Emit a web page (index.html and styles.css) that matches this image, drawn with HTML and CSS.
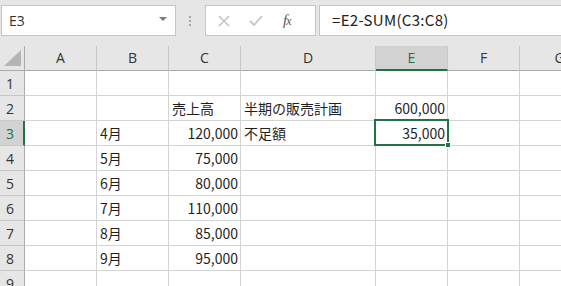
FILE: index.html
```html
<!DOCTYPE html>
<html lang="ja">
<head>
<meta charset="utf-8">
<link rel="stylesheet" href="styles.css">
</head>
<body>
<div class="toolbar">
  <div class="namebox"><span class="nb-text">E3</span><span class="nb-arrow"></span></div>
  <div class="grip"><span></span><span></span><span></span></div>
  <div class="fxbox">
    <svg class="ic" width="14" height="14" viewBox="0 0 14 14"><path d="M2 2 L12 12 M12 2 L2 12" stroke="#c4c4c4" stroke-width="1.6" fill="none"/></svg>
    <svg class="ic" width="16" height="14" viewBox="0 0 16 14"><path d="M2 7 L6 11 L14 2" stroke="#c4c4c4" stroke-width="1.8" fill="none"/></svg>
    <span class="fx"><i>f</i><i class="x">x</i></span>
  </div>
  <div class="formula">=E2-SUM(C3:C8)</div>
</div>
<div class="sheet">
  <div class="grid">
    <div class="corner"><span class="tri"></span></div>
    <div class="ch">A</div><div class="ch">B</div><div class="ch">C</div><div class="ch">D</div><div class="ch sel">E</div><div class="ch">F</div><div class="ch">G</div>

    <div class="rh">1</div><div class="c"></div><div class="c"></div><div class="c"></div><div class="c"></div><div class="c"></div><div class="c"></div><div class="c"></div>
    <div class="rh">2</div><div class="c"></div><div class="c"></div><div class="c">売上高</div><div class="c">半期の販売計画</div><div class="c n">600,000</div><div class="c"></div><div class="c"></div>
    <div class="rh sel">3</div><div class="c"></div><div class="c">4月</div><div class="c n">120,000</div><div class="c">不足額</div><div class="c n">35,000</div><div class="c"></div><div class="c"></div>
    <div class="rh">4</div><div class="c"></div><div class="c">5月</div><div class="c n">75,000</div><div class="c"></div><div class="c"></div><div class="c"></div><div class="c"></div>
    <div class="rh">5</div><div class="c"></div><div class="c">6月</div><div class="c n">80,000</div><div class="c"></div><div class="c"></div><div class="c"></div><div class="c"></div>
    <div class="rh">6</div><div class="c"></div><div class="c">7月</div><div class="c n">110,000</div><div class="c"></div><div class="c"></div><div class="c"></div><div class="c"></div>
    <div class="rh">7</div><div class="c"></div><div class="c">8月</div><div class="c n">85,000</div><div class="c"></div><div class="c"></div><div class="c"></div><div class="c"></div>
    <div class="rh">8</div><div class="c"></div><div class="c">9月</div><div class="c n">95,000</div><div class="c"></div><div class="c"></div><div class="c"></div><div class="c"></div>
    <div class="rh">9</div><div class="c"></div><div class="c"></div><div class="c"></div><div class="c"></div><div class="c"></div><div class="c"></div><div class="c"></div>
  </div>
  <div class="selection"><span class="handle"></span></div>
</div>
</body>
</html>
```

FILE: styles.css
```css
* { box-sizing: border-box; }
html, body { margin: 0; padding: 0; }
body {
  width: 561px;
  height: 286px;
  overflow: hidden;
  background: #fff;
  font-family: "Noto Sans CJK JP", "Noto Sans", sans-serif;
  color: #1f1f1f;
}
.toolbar {
  height: 46px;
  background: #e6e6e6;
  display: flex;
  align-items: flex-start;
  padding-top: 5px;
  padding-left: 1px;
}
.namebox {
  width: 175px;
  height: 31px;
  background: #fff;
  border: 1px solid #c6c6c6;
  display: flex;
  align-items: center;
  justify-content: space-between;
  padding: 0 8px 0 7px;
  font-family: "Open Sans", "Noto Sans", sans-serif;
  font-size: 14px;
  color: #333;
}
.nb-arrow {
  width: 0; height: 0;
  border-left: 4px solid transparent;
  border-right: 4px solid transparent;
  border-top: 4px solid #7a7a7a;
  margin-top: -3px;
}
.grip {
  width: 29px;
  height: 31px;
  display: flex;
  flex-direction: column;
  align-items: center;
  justify-content: center;
  gap: 2px;
  padding-right: 1px;
}
.grip span { width: 2px; height: 2px; background: #a6a6a6; }
.fxbox {
  width: 111px;
  height: 31px;
  background: #fff;
  border: 1px solid #c6c6c6;
  display: flex;
  align-items: center;
  padding-left: 11px;
  gap: 17px;
}
.fx {
  font-family: "Liberation Serif", serif;
  font-size: 15px;
  color: #555;
  margin-left: 2px;
}
.fx i { font-style: italic; }
.fx .x { font-size: 12px; margin-left: -1px; }
.formula {
  flex: 1;
  margin-left: 3px;
  height: 31px;
  background: #fff;
  border: 1px solid #c6c6c6;
  border-right: none;
  padding-left: 12px;
  font-size: 15px;
  letter-spacing: 0.3px;
  line-height: 28px;
  color: #222;
}
.sheet { position: relative; }
.grid {
  display: grid;
  width: 600px;
  grid-template-columns: 25px 72px 72px 72px 135px 72px 72px 80px;
  grid-template-rows: 25px repeat(9, 25px);
}
.corner {
  background: #e6e6e6;
  border-right: 1px solid #ababab;
  border-bottom: 1px solid #ababab;
  position: relative;
}
.tri {
  position: absolute;
  right: 3px;
  bottom: 4px;
  width: 0; height: 0;
  border-left: 17px solid transparent;
  border-bottom: 16px solid #b4b4b4;
}
.ch {
  background: #e6e6e6;
  border-right: 1px solid #c8c8c8;
  border-bottom: 1px solid #ababab;
  text-align: center;
  font-family: "Open Sans", "Noto Sans", sans-serif;
  font-size: 14px;
  line-height: 24px;
  color: #333;
}
.ch.sel {
  background: #d2d2d2;
  border-bottom: 2px solid #217346;
  color: #217346;
}
.rh {
  background: #e6e6e6;
  border-right: 1px solid #ababab;
  border-bottom: 1px solid #c8c8c8;
  padding-left: 6px;
  font-family: "Open Sans", "Noto Sans", sans-serif;
  font-size: 14px;
  line-height: 25px;
  color: #333;
}
.rh.sel {
  background: #d2d2d2;
  border-right: 2px solid #217346;
  color: #217346;
}
.c {
  border-right: 1px solid #d4d4d4;
  border-bottom: 1px solid #d4d4d4;
  font-size: 14px;
  line-height: 24px;
  padding: 0 2px 0 3px;
  white-space: nowrap;
  overflow: visible;
  color: #1f1f1f;
}
.c.n { text-align: right; }
.selection {
  position: absolute;
  left: 374px;
  top: 73px;
  width: 75px;
  height: 27px;
  border: 2px solid #217346;
}
.handle {
  position: absolute;
  right: -4px;
  bottom: -4px;
  width: 6px;
  height: 6px;
  background: #217346;
  border: 1px solid #fff;
}
```
